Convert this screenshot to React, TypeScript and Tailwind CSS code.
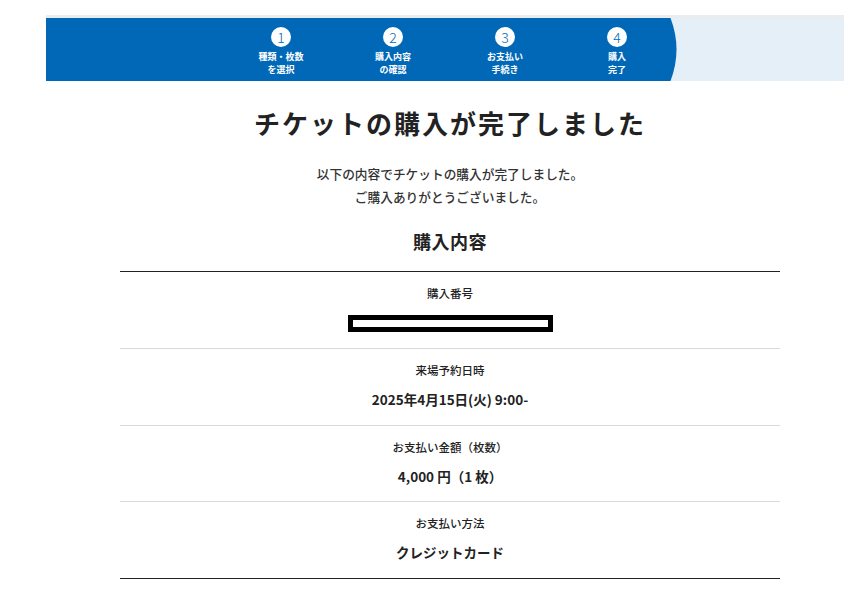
const steps = [
  { no: '1', label: ['種類・枚数', 'を選択'] },
  { no: '2', label: ['購入内容', 'の確認'] },
  { no: '3', label: ['お支払い', '手続き'] },
  { no: '4', label: ['購入', '完了'] },
];

const rows = [
  { label: '来場予約日時', value: '2025年4月15日(火) 9:00-' },
  { label: 'お支払い金額（枚数）', value: '4,000 円（1 枚）' },
  { label: 'お支払い方法', value: 'クレジットカード' },
];

function StepBar() {
  return (
    <div className="ml-[46px] w-[798px] pt-[15px]">
      <div className="border-t-[3px] border-[#ececec] h-[66px] bg-[#e5eff8] flex">
        <div className="w-[624px] h-full bg-[#0068b7] flex pl-[179px] shrink-0">
          {steps.map((s) => (
            <div key={s.no} className="w-[112px] shrink-0 flex flex-col items-center">
              <div className="mt-[9px] w-[20px] h-[20px] rounded-full bg-white flex items-center justify-center text-[14px] leading-none font-light text-[#0068b7]">
                {s.no}
              </div>
              <div className="mt-[3px] text-[9px] leading-[13px] font-bold text-white text-center">
                {s.label.map((l) => (
                  <div key={l}>{l}</div>
                ))}
              </div>
            </div>
          ))}
        </div>
        <svg width="8" height="63" viewBox="0 0 8 63" className="shrink-0 block">
          <path d="M0 0 H0.5 Q12.5 31.5 0.5 63 H0 Z" fill="#0068b7" />
        </svg>
      </div>
    </div>
  );
}

export default function App() {
  return (
    <div
      className="w-[900px] min-h-[607px] bg-white text-[#222]"
      style={{ fontFamily: '"Noto Sans CJK JP", "Noto Sans", sans-serif' }}
    >
      <StepBar />

      <h1 className="mt-[24px] text-center text-[26px] leading-[36px] font-bold tracking-[2px]">
        チケットの購入が完了しました
      </h1>

      <div className="mt-[21px] text-center text-[12.7px] leading-[23px] font-medium text-[#333]">
        <p>以下の内容でチケットの購入が完了しました。</p>
        <p>ご購入ありがとうございました。</p>
      </div>

      <h2 className="mt-[20px] text-center text-[18px] leading-[26px] font-bold tracking-[0.5px]">
        購入内容
      </h2>

      <div className="mt-[17px] mx-auto w-[660px] border-t border-b border-[#222]">
        <div className="pt-[13px] pb-[16px] flex flex-col items-center border-b border-[#d9d9d9]">
          <div className="text-[11.5px] leading-[16px] font-medium">購入番号</div>
          <div className="mt-[14px] w-[205px] h-[17px] border-[5px] border-black bg-white" />
        </div>
        {rows.map((r, i) => (
          <div
            key={r.label}
            className={
              i < rows.length - 1
                ? 'pt-[13px] pb-[15.5px] flex flex-col items-center border-b border-[#d9d9d9]'
                : 'pt-[13px] pb-[15.5px] flex flex-col items-center'
            }
          >
            <div className="text-[11.5px] leading-[16px] font-medium">{r.label}</div>
            <div className="mt-[11px] text-[13.5px] leading-[20px] font-bold">{r.value}</div>
          </div>
        ))}
      </div>
    </div>
  );
}
